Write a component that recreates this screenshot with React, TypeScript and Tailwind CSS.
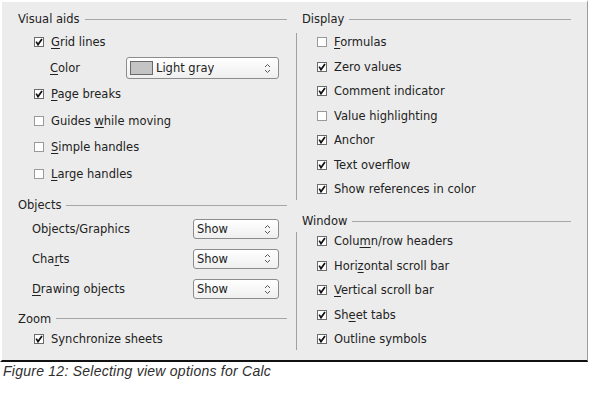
import React from "react";

const U = ({ children }: { children: React.ReactNode }) => (
  <span className="underline underline-offset-[2px] decoration-[1px]">{children}</span>
);

function Box({ checked }: { checked: boolean }) {
  return (
    <svg width="10" height="10" viewBox="0 0 10 10" className="shrink-0">
      <rect x="0.5" y="0.5" width="9" height="9" fill="#ffffff" stroke={checked ? "#6b6b6b" : "#9a9a9a"} />
      {checked && <path d="M2.2 4.6 L4 7.6 L8 2" fill="none" stroke="#111" strokeWidth="1.7" />}
    </svg>
  );
}

function Spin() {
  return (
    <svg width="7" height="11" viewBox="0 0 7 11" className="shrink-0">
      <path d="M1 4 L3.5 1.5 L6 4" fill="none" stroke="#555" strokeWidth="1" />
      <path d="M1 7 L3.5 9.5 L6 7" fill="none" stroke="#555" strokeWidth="1" />
    </svg>
  );
}

function Heading({ children, cls }: { children: React.ReactNode; cls: string }) {
  return (
    <div className={"flex items-center gap-[5px] " + cls}>
      <span>{children}</span>
      <div className="flex-1 h-px bg-[#a6a6a6]" />
    </div>
  );
}

function Check({ checked, children, cls }: { checked: boolean; children: React.ReactNode; cls: string }) {
  return (
    <div className={"flex items-center gap-[7px] " + cls}>
      <Box checked={checked} />
      <span>{children}</span>
    </div>
  );
}

function ShowSelect() {
  return (
    <div className="w-[86px] h-[20px] rounded-[3px] border border-[#8c8c8c] bg-gradient-to-b from-[#ffffff] to-[#efefef] flex items-center pl-[3px] pr-[7px]">
      <span className="flex-1">Show</span>
      <Spin />
    </div>
  );
}

export default function App() {
  return (
    <div className="w-[591px] h-[406px] bg-white overflow-hidden text-[11.5px] leading-[14px] text-[#222222] font-['DejaVu_Sans',sans-serif]">
      <div className="w-[588px] h-[362px] bg-[#ececec] border-t-2 border-l-2 border-white border-r border-r-[#9c9c9c] border-b-2 border-b-[#111] flex">
        {/* Left column */}
        <div className="w-[294px] flex flex-col pt-[7px] pl-[16px] pr-[9px]">
          <Heading cls="h-[20px]">Visual aids</Heading>
          <Check checked cls="h-[26px] pl-[16px]">
            <U>G</U>rid lines
          </Check>
          <div className="h-[26px] flex items-center pl-[32px]">
            <span className="w-[76px]">
              <U>C</U>olor
            </span>
            <div className="w-[153px] h-[22px] rounded-[3px] border border-[#8c8c8c] bg-gradient-to-b from-[#ffffff] to-[#efefef] flex items-center pl-[3px] pr-[7px] gap-[3px]">
              <div className="w-[23px] h-[14px] bg-[#c4c4c4] border border-[#6a6a6a]" />
              <span className="flex-1">Light gray</span>
              <Spin />
            </div>
          </div>
          <Check checked cls="h-[26px] pl-[16px]">
            <U>P</U>age breaks
          </Check>
          <Check checked={false} cls="h-[27px] pl-[16px]">
            Guides <U>w</U>hile moving
          </Check>
          <Check checked={false} cls="h-[26px] pl-[16px]">
            <U>S</U>imple handles
          </Check>
          <Check checked={false} cls="h-[27px] pl-[16px]">
            <U>L</U>arge handles
          </Check>
          <Heading cls="h-[20px] mt-[8px]">Objects</Heading>
          <div className="h-[28px] flex items-center justify-between pl-[14px] pr-[8px]">
            <span>Objects/Graphics</span>
            <ShowSelect />
          </div>
          <div className="h-[31px] flex items-center justify-between pl-[14px] pr-[8px]">
            <span>
              Cha<U>r</U>ts
            </span>
            <ShowSelect />
          </div>
          <div className="h-[30px] flex items-center justify-between pl-[14px] pr-[8px]">
            <span>
              <U>D</U>rawing objects
            </span>
            <ShowSelect />
          </div>
          <Heading cls="h-[21px] mt-[4px]">Zoom</Heading>
          <Check checked cls="h-[20px] pl-[16px]">
            Synchronize sheets
          </Check>
        </div>

        {/* Right column */}
        <div className="flex-1 flex flex-col pt-[7px] pr-[16px]">
          <Heading cls="h-[20px] pl-[6px]">Display</Heading>
          <div className="mt-[4px] border-l border-[#a0a0a0] pl-[20px] pb-[2px] flex flex-col gap-[6.5px]">
            <Check checked={false} cls="h-[18px]">
              <U>F</U>ormulas
            </Check>
            <Check checked cls="h-[18px]">
              Zero values
            </Check>
            <Check checked cls="h-[18px]">
              Comment indicator
            </Check>
            <Check checked={false} cls="h-[18px]">
              Value highlighting
            </Check>
            <Check checked cls="h-[18px]">
              Anchor
            </Check>
            <Check checked cls="h-[18px]">
              Text overflow
            </Check>
            <Check checked cls="h-[18px]">
              Show references in color
            </Check>
          </div>
          <Heading cls="h-[20px] pl-[6px] mt-[11px]">Window</Heading>
          <div className="mt-[1px] border-l border-[#a0a0a0] pl-[20px] pb-[2px] flex flex-col gap-[6.5px]">
            <Check checked cls="h-[18px]">
              Colu<U>m</U>n/row headers
            </Check>
            <Check checked cls="h-[18px]">
              Hori<U>z</U>ontal scroll bar
            </Check>
            <Check checked cls="h-[18px]">
              <U>V</U>ertical scroll bar
            </Check>
            <Check checked cls="h-[18px]">
              Sh<U>e</U>et tabs
            </Check>
            <Check checked cls="h-[18px]">
              Outline symbols
            </Check>
          </div>
        </div>
      </div>
      <div className="mt-[1px] pl-[3px] text-[14px] leading-[16px] italic tracking-[0.25px] text-[#2e2e2e] font-['Liberation_Sans',sans-serif]">
        Figure 12: Selecting view options for Calc
      </div>
    </div>
  );
}
